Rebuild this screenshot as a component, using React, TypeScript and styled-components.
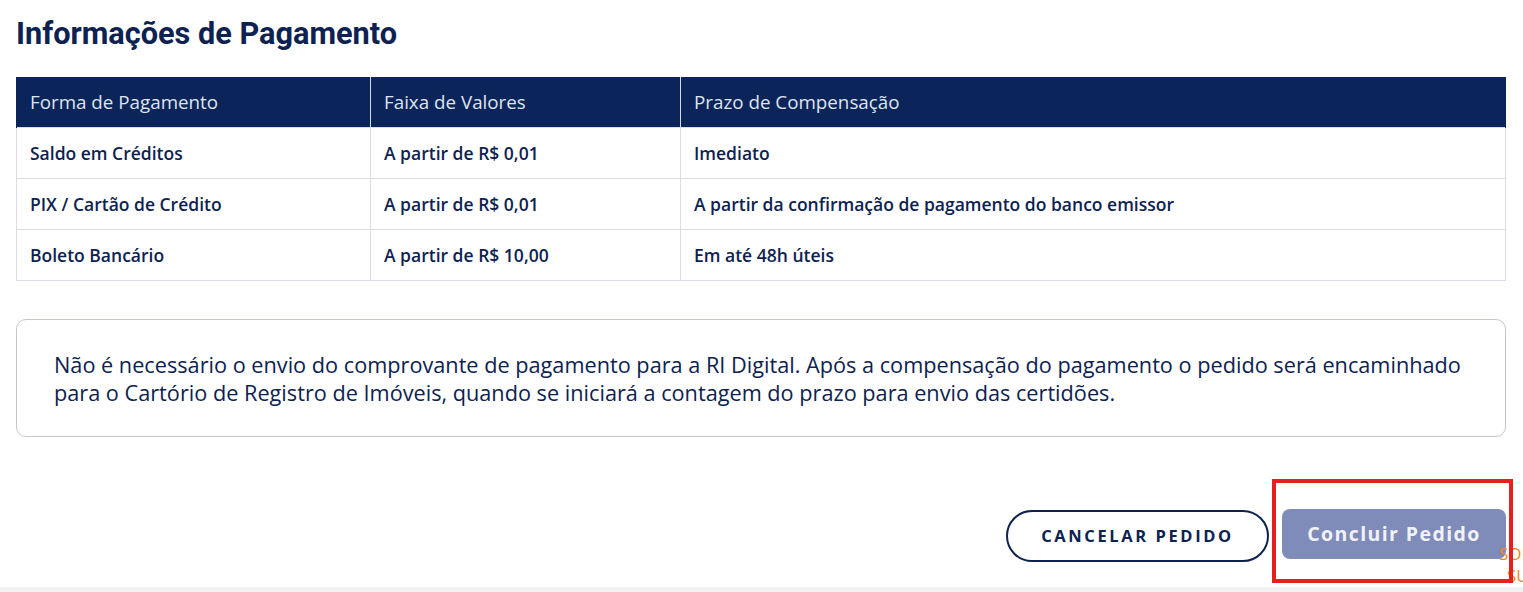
import React from "react";
import styled, { createGlobalStyle } from "styled-components";

const Global = createGlobalStyle`
  html, body { margin: 0; padding: 0; background: #ffffff; overflow: hidden; }
  body { font-family: "Open Sans", "Noto Sans", sans-serif; color: #0d2250; }
`;

const Page = styled.div`
  position: relative;
  width: 1523px;
  height: 592px;
  overflow: hidden;
  background: #ffffff;
`;

const Content = styled.main`
  padding: 14px 17px 0 16px;
  display: flex;
  flex-direction: column;
`;

const Title = styled.h2`
  margin: 0;
  font-family: Roboto, "Open Sans", sans-serif;
  font-weight: 700;
  font-size: 30.7px;
  line-height: 40px;
  color: #0d2250;
  letter-spacing: 0;
`;

const Table = styled.table`
  margin-top: 23px;
  width: 1490px;
  border-collapse: collapse;
  table-layout: fixed;
`;

const Th = styled.th<{ $w?: number }>`
  box-sizing: border-box;
  width: ${(p) => (p.$w ? `${p.$w}px` : "auto")};
  height: 50px;
  padding: 0 13px;
  background: #0b2459;
  color: #dfe5ef;
  font-weight: 400;
  font-size: 18.8px;
  text-align: left;
  border-left: 1px solid #d6dae2;
  border-right: 1px solid #d6dae2;
  &:first-child { border-left-color: #0b2459; }
  &:last-child { border-right-color: #0b2459; }
`;

const Td = styled.td`
  height: 50px;
  padding: 0 13px;
  font-weight: 600;
  font-size: 17.5px;
  color: #0d2250;
  border: 1px solid #dadde3;
`;

const InfoBox = styled.div`
  margin-top: 38px;
  width: 1490px;
  box-sizing: border-box;
  border: 1px solid #c2c6ce;
  border-radius: 10px;
  padding: 31px 18px 29px 37px;
  font-size: 21.7px;
  line-height: 28px;
  color: #0d2250;
`;

const Actions = styled.div`
  margin-top: 73px;
  display: flex;
  justify-content: flex-end;
  align-items: flex-start;
  gap: 13px;
`;

const OutlineButton = styled.button`
  width: 263px;
  height: 52px;
  border: 2px solid #0d2250;
  border-radius: 26px;
  background: #ffffff;
  color: #0d2250;
  font-family: "Open Sans", sans-serif;
  font-weight: 700;
  font-size: 16.5px;
  letter-spacing: 2.6px;
  cursor: pointer;
`;

const FilledButton = styled.button`
  width: 224px;
  height: 50px;
  border: none;
  border-radius: 8px;
  background: #7f8bb9;
  color: #f1f2f7;
  font-family: "Open Sans", sans-serif;
  font-weight: 700;
  font-size: 19.5px;
  letter-spacing: 1.4px;
  cursor: pointer;
  margin-top: -1px;
`;

const Highlight = styled.div`
  position: absolute;
  left: 1272px;
  top: 479px;
  width: 241px;
  height: 104px;
  box-sizing: border-box;
  border: 4px solid #e5201f;
  pointer-events: none;
`;

const Floating = styled.div`
  position: absolute;
  left: 1499px;
  top: 543px;
  font-family: "Open Sans", sans-serif;
  font-size: 17px;
  line-height: 22px;
  color: #f5841f;
  white-space: nowrap;
`;

const FloatingLine = styled.div<{ $indent?: number }>`
  padding-left: ${(p) => p.$indent ?? 0}px;
`;

const BottomStrip = styled.div`
  position: absolute;
  left: 0;
  right: 0;
  bottom: 0;
  height: 5px;
  background: #f2f2f3;
`;

const rows = [
  ["Saldo em Créditos", "A partir de R$ 0,01", "Imediato"],
  ["PIX / Cartão de Crédito", "A partir de R$ 0,01", "A partir da confirmação de pagamento do banco emissor"],
  ["Boleto Bancário", "A partir de R$ 10,00", "Em até 48h úteis"],
];

export default function App() {
  return (
    <Page>
      <Global />
      <Content>
        <Title>Informações de Pagamento</Title>
        <Table>
          <thead>
            <tr>
              <Th $w={354}>Forma de Pagamento</Th>
              <Th $w={310}>Faixa de Valores</Th>
              <Th>Prazo de Compensação</Th>
            </tr>
          </thead>
          <tbody>
            {rows.map((r) => (
              <tr key={r[0]}>
                {r.map((c) => (
                  <Td key={c}>{c}</Td>
                ))}
              </tr>
            ))}
          </tbody>
        </Table>
        <InfoBox>
          Não é necessário o envio do comprovante de pagamento para a RI Digital. Após a compensação do pagamento o pedido será encaminhado
          para o Cartório de Registro de Imóveis, quando se iniciará a contagem do prazo para envio das certidões.
        </InfoBox>
        <Actions>
          <OutlineButton>CANCELAR PEDIDO</OutlineButton>
          <FilledButton>Concluir Pedido</FilledButton>
        </Actions>
      </Content>
      <Floating>
        <FloatingLine>SOLICITE</FloatingLine>
        <FloatingLine $indent={8}>SUPORTE</FloatingLine>
      </Floating>
      <BottomStrip />
      <Highlight />
    </Page>
  );
}
